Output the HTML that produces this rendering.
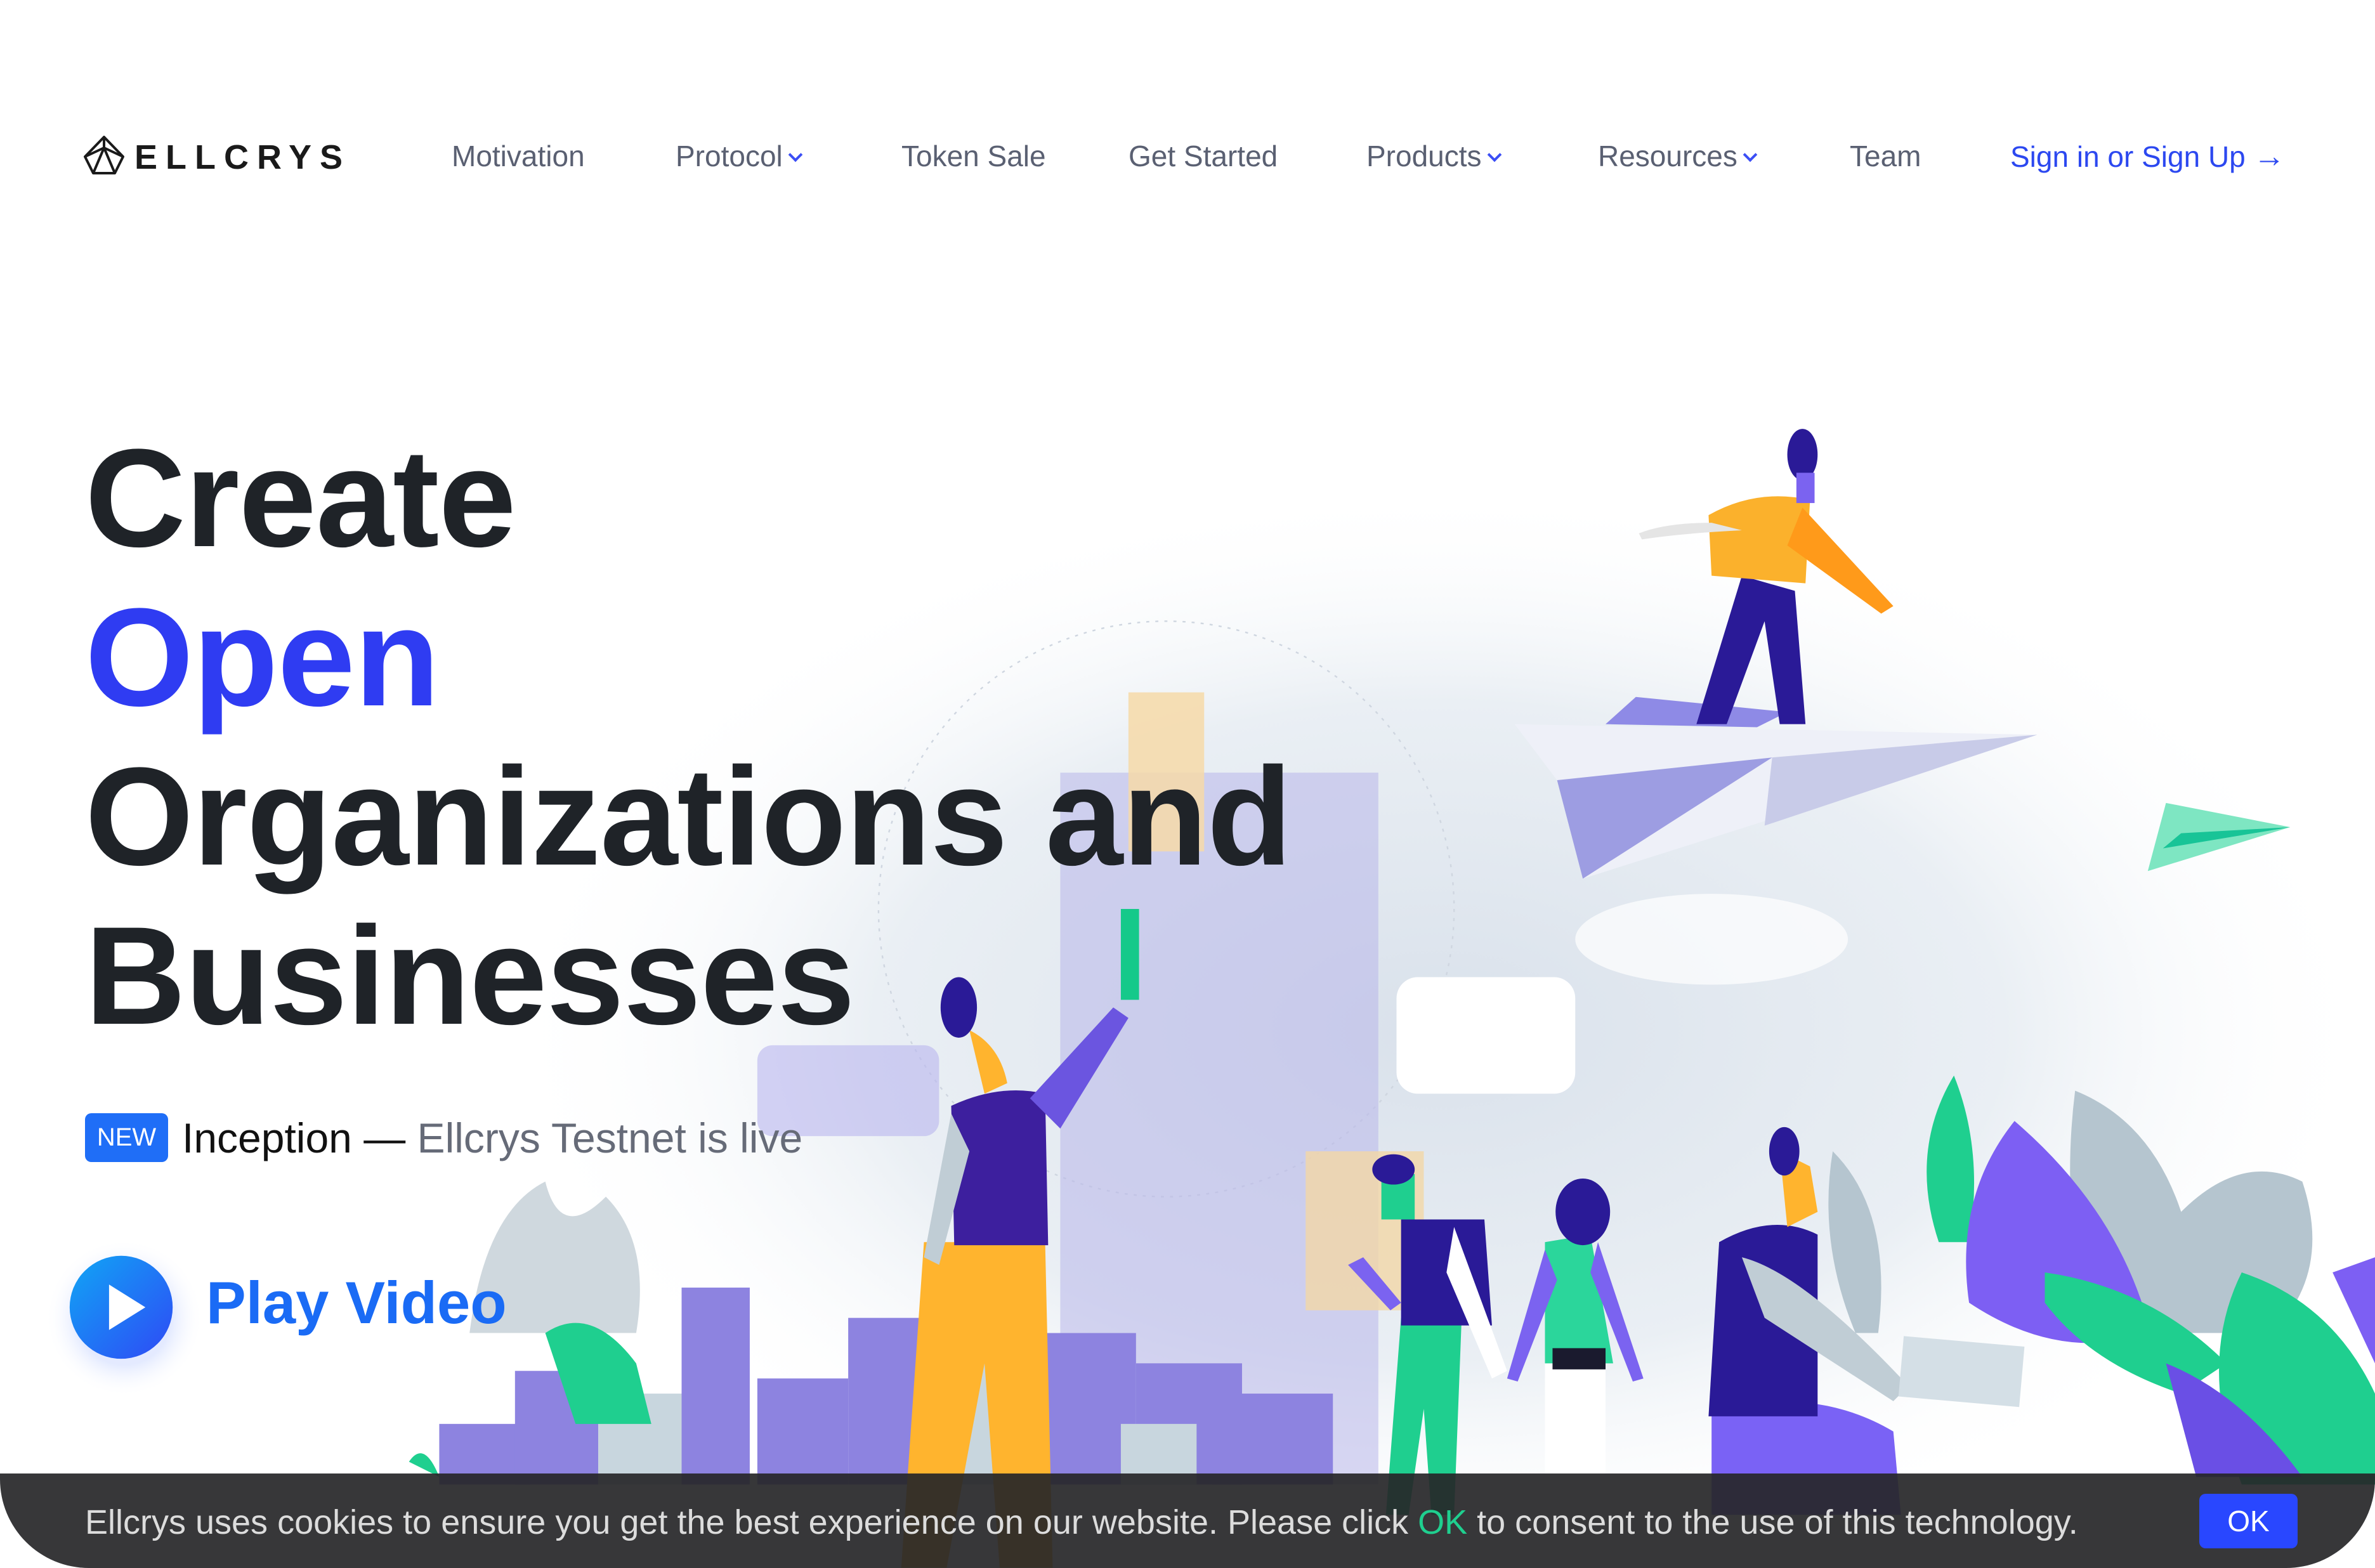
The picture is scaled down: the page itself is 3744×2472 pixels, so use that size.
<!DOCTYPE html>
<html><head><meta charset="utf-8"><style>
*{margin:0;padding:0;box-sizing:border-box}
body{width:3744px;height:2472px;overflow:hidden;background:#fff;font-family:"Liberation Sans",sans-serif;position:relative}
.abs{position:absolute;white-space:nowrap}
.nav{top:216px;font-size:46px;color:#5a6072;line-height:60px}
.chev{display:inline-block;width:16px;height:16px;border-right:4px solid #3b4ef5;border-bottom:4px solid #3b4ef5;transform:rotate(45deg);margin-left:12px;position:relative;top:-10px}
h1{position:absolute;left:134px;top:660px;font-size:220px;line-height:251px;font-weight:700;color:#1f2328;letter-spacing:-1px}
</style></head><body>
<svg class="abs" style="left:0;top:0" width="3744" height="2472" viewBox="0 0 1568 1035">
<defs>
<radialGradient id="bg" cx="0.5" cy="0.5" r="0.5"><stop offset="0" stop-color="#d9e1eb"/><stop offset="0.6" stop-color="#e6ecf2" stop-opacity="0.85"/><stop offset="1" stop-color="#fff" stop-opacity="0"/></radialGradient>
<linearGradient id="pb" x1="0" y1="0" x2="1" y2="1"><stop offset="0" stop-color="#10a6f5"/><stop offset="1" stop-color="#2f49f5"/></linearGradient>
<radialGradient id="sh" cx="0.5" cy="0.5" r="0.5"><stop offset="0.6" stop-color="#c9d6ff" stop-opacity="0.5"/><stop offset="1" stop-color="#fff" stop-opacity="0"/></radialGradient>
</defs>
<ellipse cx="950" cy="680" rx="620" ry="360" fill="url(#bg)"/>
<circle cx="770" cy="600" r="190" fill="none" stroke="#cfd6e0" stroke-dasharray="2 4"/>
<rect x="700" y="510" width="210" height="470" fill="#b8b6ea" opacity="0.55"/>
<rect x="500" y="690" width="120" height="60" rx="10" fill="#b9b5ee" opacity="0.6"/>
<rect x="745" y="457" width="50" height="105" fill="#f6d9a8" opacity="0.85"/>
<rect x="862" y="760" width="78" height="105" fill="#f3d7a6" opacity="0.8"/>
<rect x="922" y="645" width="118" height="77" rx="14" fill="#fff"/>
<ellipse cx="1130" cy="620" rx="90" ry="30" fill="#fff" opacity="0.7"/>
<polygon points="1000,478 1345,485 1045,580 1028,515" fill="#eef0f8"/>
<polygon points="1028,515 1170,500 1045,580" fill="#9d9de2"/>
<polygon points="1170,500 1345,485 1165,545" fill="#c8cbe8"/>
<polygon points="1060,478 1080,460 1180,470 1160,480" fill="#8e8ae6"/>
<path d="M1150 380 L1120 478 L1140 478 L1165 410 L1175 478 L1192 478 L1185 390 Z" fill="#2a1a97"/>
<path d="M1128 340 Q1160 322 1195 330 L1192 385 L1130 380 Z" fill="#fbb12c"/>
<path d="M1190 335 L1250 400 L1242 405 L1180 360 Z" fill="#ff9a1a"/>
<path d="M1130 345 Q1100 345 1082 352 L1084 356 Q1110 352 1150 350 Z" fill="#e5e5e5"/>
<ellipse cx="1190" cy="300" rx="10" ry="17" fill="#2a1a97"/>
<rect x="1186" y="312" width="12" height="20" fill="#7b63f0"/>
<polygon points="1430,530 1512,546 1418,575" fill="#7ee6c2"/>
<polygon points="1440,550 1512,546 1428,560" fill="#18c497"/>
<path d="M310 880 Q320 800 360 780 Q370 820 400 790 Q430 820 420 880 Z" fill="#cfd8de"/>
<g fill="#8d83e0">
<rect x="290" y="940" width="60" height="40"/><rect x="340" y="905" width="55" height="75"/><rect x="450" y="850" width="45" height="130"/><rect x="500" y="910" width="60" height="70"/><rect x="560" y="870" width="55" height="110"/><rect x="690" y="880" width="60" height="100"/><rect x="750" y="900" width="70" height="80"/><rect x="800" y="920" width="80" height="60"/>
</g>
<g fill="#c8d6de"><rect x="395" y="920" width="55" height="60"/><rect x="620" y="900" width="70" height="80"/><rect x="740" y="940" width="50" height="40"/></g>
<path d="M360 880 Q390 860 420 900 L430 940 L380 940 Z" fill="#1fcf8f"/>
<path d="M610 820 L690 820 L695 1035 L660 1035 L650 900 L625 1035 L595 1035 Z" fill="#ffb42e"/>
<path d="M628 730 Q660 715 690 722 L692 822 L630 822 Z" fill="#3d1f9e"/>
<path d="M628 735 L610 830 L620 835 L640 760 Z" fill="#c0cdd5"/>
<path d="M680 725 L735 665 L745 672 L700 745 Z" fill="#6b55e0"/>
<rect x="740" y="600" width="12" height="60" fill="#15c98a"/>
<path d="M640 680 Q660 690 665 715 L650 722 Z" fill="#ffb42e"/>
<ellipse cx="633" cy="665" rx="12" ry="20" fill="#2a1a97"/>
<path d="M925 870 L965 870 L960 1000 L945 1000 L940 930 L930 1000 L915 1000 Z" fill="#1fcf8f"/>
<path d="M925 805 L980 805 L985 875 L925 875 Z" fill="#2a1a97"/>
<path d="M960 810 L995 905 L985 910 L955 840 Z" fill="#fff"/>
<path d="M900 830 L925 860 L918 865 L890 835 Z" fill="#7b63f0"/>
<rect x="912" y="775" width="22" height="30" fill="#1fcf8f"/>
<ellipse cx="920" cy="772" rx="14" ry="10" fill="#2a1a97"/>
<path d="M1020 900 L1060 900 L1060 1000 L1020 1000 Z" fill="#fff"/>
<path d="M1020 820 L1050 815 L1065 900 L1020 900 Z" fill="#2bd69b"/>
<path d="M1055 820 L1085 910 L1078 912 L1050 840 Z" fill="#7b63f0"/>
<path d="M1020 825 L995 910 L1002 912 L1028 845 Z" fill="#7b63f0"/>
<rect x="1025" y="890" width="35" height="14" fill="#1a1a2e"/>
<ellipse cx="1045" cy="800" rx="18" ry="22" fill="#2a1a97"/>
<path d="M1130 930 Q1200 915 1250 945 L1255 1000 L1130 1000 Z" fill="#7a62f5"/>
<path d="M1135 820 Q1170 800 1200 815 L1200 935 L1128 935 Z" fill="#2a1a97"/>
<path d="M1150 830 Q1190 840 1260 915 L1250 925 L1165 870 Z" fill="#c0cdd5"/>
<rect x="1255" y="885" width="80" height="40" fill="#d4dfe6" transform="rotate(5 1290 905)"/>
<path d="M1175 760 L1195 770 L1200 800 L1180 810 Z" fill="#ffb42e"/>
<ellipse cx="1178" cy="760" rx="10" ry="16" fill="#2a1a97"/>
<path d="M1370 720 Q1420 740 1440 800 Q1480 760 1520 780 Q1540 840 1500 880 L1380 880 Q1360 800 1370 720Z" fill="#b5c5cf"/>
<path d="M1290 710 Q1310 760 1300 820 L1280 820 Q1260 760 1290 710Z" fill="#1fcf8f"/>
<path d="M1210 760 Q1250 800 1240 880 L1225 880 Q1200 820 1210 760Z" fill="#b5c5cf"/>
<path d="M1330 740 Q1400 800 1420 880 Q1360 900 1300 860 Q1290 790 1330 740Z" fill="#7d5ff3"/>
<path d="M1350 840 Q1420 850 1470 900 L1440 920 Q1380 900 1350 860Z" fill="#1fcf8f"/>
<path d="M1480 840 Q1540 860 1568 920 L1568 980 L1480 980 Q1450 900 1480 840Z" fill="#1fcf8f"/>
<path d="M1430 900 Q1480 920 1520 975 L1450 975 Z" fill="#6a4fe5"/>
<path d="M1540 840 L1568 830 L1568 900 Z" fill="#7d5ff3"/>
<path d="M270 965 Q280 950 290 975 Z" fill="#1fcf8f"/>
<circle cx="82" cy="870" r="52" fill="url(#sh)"/>
<circle cx="80" cy="863" r="34" fill="url(#pb)"/>
<polygon points="72,848 72,878 96,863" fill="#fff"/>
</svg>

<svg class="abs" style="left:131px;top:213px" width="66" height="64" viewBox="0 0 66 64"><g fill="none" stroke="#1a1a1a" stroke-width="4" stroke-linejoin="round"><polygon points="33,3 63,34 50,60 16,60 3,34"/><polyline points="3,34 33,20 63,34"/><polyline points="16,60 33,20 50,60"/><polyline points="33,3 33,20"/></g></svg>
<div class="abs" style="left:212px;top:218px;font-size:54px;font-weight:700;letter-spacing:13px;color:#1a1a1a;line-height:60px">ELLCRYS</div>

<div class="abs nav" style="left:712px">Motivation</div>
<div class="abs nav" style="left:1065px">Protocol<span class="chev"></span></div>
<div class="abs nav" style="left:1421px">Token Sale</div>
<div class="abs nav" style="left:1779px">Get Started</div>
<div class="abs nav" style="left:2154px">Products<span class="chev"></span></div>
<div class="abs nav" style="left:2519px">Resources<span class="chev"></span></div>
<div class="abs nav" style="left:2916px">Team</div>
<div class="abs nav" style="left:3169px;color:#2c48f0">Sign in or Sign Up <span style="font-size:50px">→</span></div>

<h1>Create<br><span style="color:#2f3cf2">Open</span><br>Organizations and<br>Businesses</h1>

<div class="abs" style="left:134px;top:1755px;width:131px;height:77px;background:#1f6ef7;border-radius:10px;color:#fff;font-size:40px;line-height:77px;text-align:center">NEW</div>
<div class="abs" style="left:287px;top:1754px;font-size:66px;line-height:80px;color:#111">Inception — <span style="color:#666b78">Ellcrys Testnet is live</span></div>

<div class="abs" style="left:325px;top:1994px;font-size:94px;font-weight:700;color:#1a6bf5;line-height:120px">Play Video</div>

<div class="abs" style="left:0;top:2323px;width:3744px;height:149px;background:rgba(38,38,40,0.92);border-radius:0 0 140px 140px"></div>
<div class="abs" style="left:134px;top:2368px;font-size:54px;line-height:64px;color:#dcdcdc">Ellcrys uses cookies to ensure you get the best experience on our website. Please click <span style="color:#1fcf8f">OK</span> to consent to the use of this technology.</div>
<div class="abs" style="left:3467px;top:2355px;width:155px;height:86px;background:#2947ff;border-radius:10px;color:#fff;font-size:46px;line-height:86px;text-align:center">OK</div>
</body></html>
